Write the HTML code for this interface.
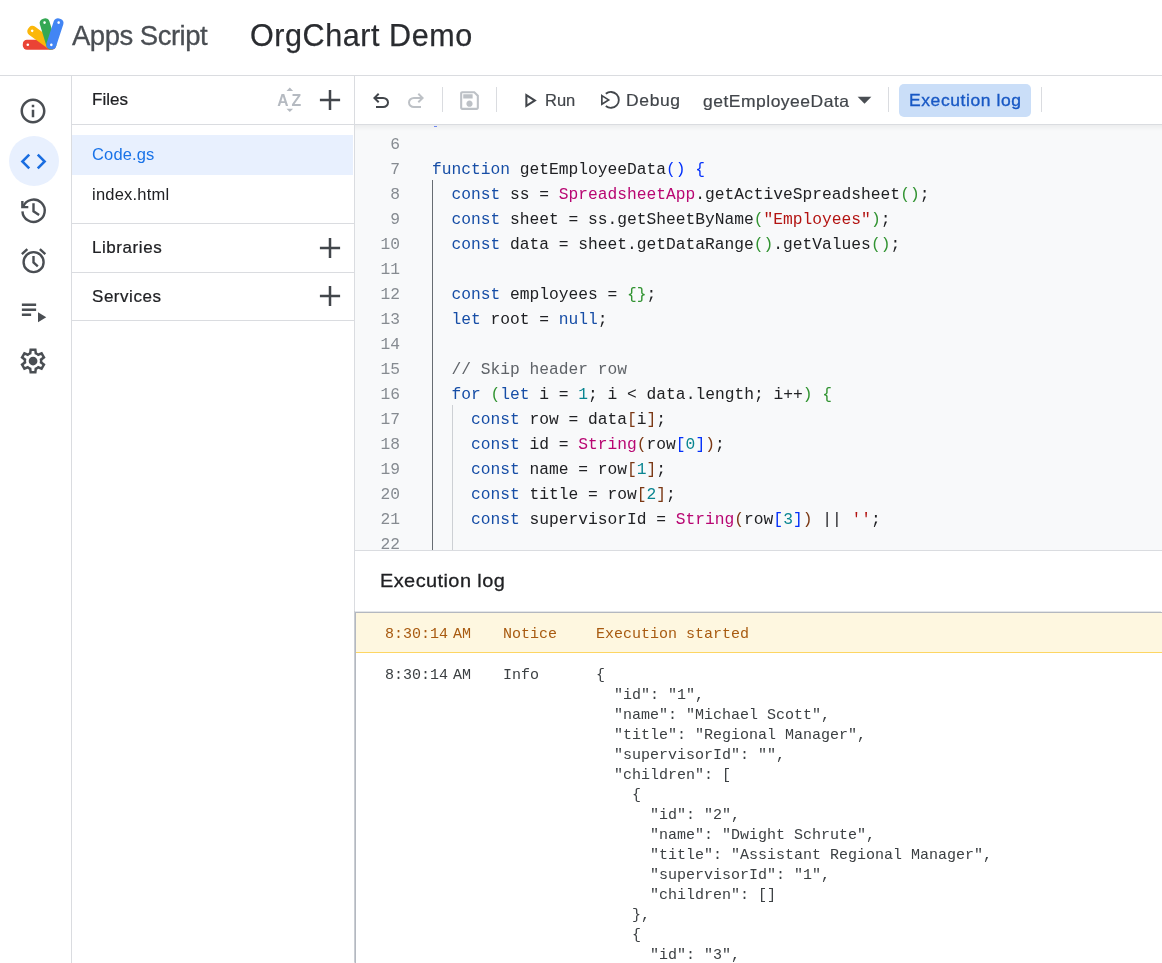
<!DOCTYPE html>
<html lang="en">
<head>
<meta charset="utf-8">
<title>OrgChart Demo - Apps Script</title>
<style>
*{box-sizing:border-box;margin:0;padding:0}
html,body{width:1162px;height:963px;overflow:hidden;background:#fff}
body{position:relative;font-family:"Liberation Sans",Arial,sans-serif;color:#202124}
.abs{position:absolute}
.fhead,.fitem,.tbt,.lt,#brand,#proj,#lgtitle,#ed{will-change:transform}
/* header */
#hdr{left:0;top:0;width:1162px;height:75px;background:#fff}
#hline{left:0;top:75px;width:1162px;height:1px;background:#dadce0}
#brand{-webkit-text-stroke:0.300px #4a4e53;left:72px;top:18px;font-size:27.5px;line-height:36px;color:#4a4e53;white-space:nowrap;letter-spacing:-0.5px}
#proj{-webkit-text-stroke:0.250px #2a2c30;left:249.500px;top:17px;font-size:30.500px;line-height:36px;color:#2a2c30;white-space:nowrap;letter-spacing:0.580px}
/* rail */
#rail{left:0;top:76px;width:71px;height:887px;background:#fff}
#railline{left:71px;top:76px;width:1px;height:887px;background:#dadce0}
.ricon{position:absolute;left:18px;width:30px;height:30px}
#selcirc{left:9px;top:136px;width:50px;height:50px;border-radius:50%;background:#e8f0fe}
/* files */
#files{left:72px;top:76px;width:282px;height:887px;background:#fff}
#filesline{left:354px;top:76px;width:1px;height:887px;background:#dadce0}
.fhead{-webkit-text-stroke:0.220px #202124;position:absolute;left:92px;font-size:17px;line-height:24px;color:#202124;white-space:nowrap}
.fitem{position:absolute;left:92px;font-size:16.5px;line-height:24px;color:#202124;white-space:nowrap}
.hl{position:absolute;left:72px;width:282px;height:1px;background:#dadce0}
.plus{position:absolute;left:319px;width:21px;height:21px}
/* toolbar */
#tb{left:355px;top:76px;width:807px;height:48px;background:#fff}
#tbline{left:355px;top:124px;width:807px;height:1px;background:#dadce0}
.tbt{-webkit-text-stroke:0.200px #41454a;position:absolute;font-size:16.500px;line-height:24px;color:#41454a;transform-origin:0 50%;white-space:nowrap}
.vsep{position:absolute;width:1px;height:25px;top:87px;background:#dadce0}
/* editor */
#ed{left:355px;top:125px;width:807px;height:425px;background:#f8f9fa;overflow:hidden}
#edline{left:355px;top:550px;width:807px;height:1px;background:#dadce0}
.ln,.cl{position:absolute;font-family:"Liberation Mono","DejaVu Sans Mono",monospace;font-size:16.25px;line-height:25px;height:25px;white-space:pre}
.ln{left:0;width:45px;text-align:right;color:#868b91}
.cl{left:77px;color:#202124}
.k{color:#174ea6}.c{color:#b31412}.t{color:#b80672}.n{color:#098591}.cm{color:#5f6368}
.b1{color:#0431fa}.b2{color:#319331}.b3{color:#7b3814}
.guide{position:absolute;width:1px;background:#9aa0a6}
/* log */
#lg{left:355px;top:551px;width:807px;height:412px;background:#fff}
#lgtitle{-webkit-text-stroke:0.280px #202124;letter-spacing:0.400px;left:380px;top:567px;font-size:19px;line-height:28px;color:#202124;white-space:nowrap;transform:scaleX(1.050);transform-origin:0 50%}
#lgbox{left:355px;top:612px;width:812px;height:360px;border:1px solid #b4b8c0;background:#fff}
#lgtop{left:355px;top:611px;width:806px;height:1px;background:#e4e6e9}
#lgleft{left:354px;top:611px;width:1px;height:351px;background:#c9cdd3}
#notice{left:356px;top:613px;width:806px;height:40px;background:#fef7e0;border-bottom:1px solid #fdd663}
.lt{position:absolute;font-family:"Liberation Mono","DejaVu Sans Mono",monospace;font-size:15px;line-height:20px;height:20px;white-space:pre;color:#3c4043}
.nt{color:#a85a10}
</style>
</head>
<body>
<div id="hdr" class="abs"></div>
<div id="hline" class="abs"></div>
<div id="brand" class="abs">Apps Script</div>
<div id="proj" class="abs">OrgChart Demo</div>

<div id="rail" class="abs"></div>
<div id="railline" class="abs"></div>
<div id="selcirc" class="abs"></div>
<svg class="abs" id="logo" style="left:20px;top:14px" width="48" height="40" viewBox="0 0 48 40">
<g transform="translate(31.300 30.800)">
<g transform="rotate(180)"><rect x="-4.500" y="-5" width="33" height="10" rx="4.200" fill="#ea4335"/><circle cx="23.500" cy="0" r="1.300" fill="#fff"/></g>
<g transform="rotate(-143.800)"><rect x="-4.500" y="-5" width="32.700" height="10" rx="4.200" fill="#fbb70a"/><circle cx="23.700" cy="0" r="1.300" fill="#fff"/></g>
<g transform="rotate(-106.800)"><rect x="-4.500" y="-5" width="31.800" height="10" rx="4.200" fill="#34a853"/><circle cx="23.200" cy="0" r="1.300" fill="#fff"/></g>
<g transform="rotate(-71.800)"><rect x="-4.500" y="-5" width="32" height="10" rx="4.200" fill="#4285f4"/><circle cx="23.400" cy="0" r="1.300" fill="#fff"/><circle cx="0" cy="0" r="1.300" fill="#fff"/></g>
</g>
</svg>
<svg class="ricon" id="ic-info" style="top:96px" viewBox="0 0 24 24"><path fill="#4a4e53" d="M11 7h2v2h-2zm0 4h2v6h-2zm1-9C6.48 2 2 6.48 2 12s4.48 10 10 10 10-4.48 10-10S17.52 2 12 2zm0 18c-4.41 0-8-3.59-8-8s3.59-8 8-8 8 3.59 8 8-3.59 8-8 8z"/></svg>
<svg class="ricon" id="ic-code" style="top:145.500px;left:18.300px;width:31px;height:31px" viewBox="0 0 24 24"><path fill="#1a6de0" d="M9.4 16.6L4.8 12l4.6-4.6L8 6l-6 6 6 6 1.4-1.4zm5.2 0l4.6-4.6-4.6-4.6L16 6l6 6-6 6-1.4-1.4z"/></svg>
<svg class="abs" id="ic-hist" style="left:16px;top:193px" width="36" height="36" viewBox="0 0 36 36"><g fill="none" stroke="#4a4e53" stroke-width="2.400"><path d="M7.230 13.570A11.150 11.150 0 1 1 6.440 18.330"/><path d="M6.350 8V14.150H12.300"/><path d="M17.500 10.300V18.300L23.100 21.900"/></g></svg>
<svg class="abs" id="ic-alarm" style="left:16px;top:243px" width="36" height="36" viewBox="0 0 36 36"><g fill="none" stroke="#4a4e53" stroke-width="2.400"><circle cx="17.600" cy="19.150" r="10"/><path d="M5.870 11.100L11.330 6.090M29.330 11.100L23.870 6.090"/><path d="M17.500 13.100V19.500L21.800 23.300"/></g></svg>
<svg class="ricon" id="ic-exec" style="top:296px" viewBox="0 0 24 24"><path fill="#4a4e53" d="M3.100 16v-2h7.400v2zm0-4v-2h11.400v2zm0-4V6h11.400v2zM16 20.900v-8l6.600 4z"/></svg>
<svg class="ricon" id="ic-gear" style="top:346px;left:17.600px" viewBox="0 0 24 24"><path fill="#4a4e53" d="m9.250 22-.4-3.200q-.325-.125-.612-.3t-.563-.375L4.700 19.375l-2.750-4.750 2.575-1.950Q4.500 12.500 4.500 12.338v-.675q0-.163.025-.338L1.950 9.375l2.750-4.750 2.975 1.250q.275-.2.575-.375t.6-.3l.4-3.200h5.500l.4 3.200q.325.125.613.300t.562.375l2.975-1.250 2.750 4.750-2.575 1.950q.025.175.025.338v.675q0 .163-.05.338l2.575 1.950-2.750 4.750-2.950-1.250q-.275.200-.575.375t-.600.300l-.4 3.200zM11 20h1.975l.350-2.650q.775-.2 1.438-.587t1.212-.938l2.475 1.025.975-1.700-2.150-1.625q.125-.350.175-.737T17.500 12t-.05-.787-.175-.738l2.150-1.625-.975-1.700-2.475 1.050q-.550-.575-1.212-.962t-1.438-.588L13 4h-1.975l-.350 2.650q-.775.200-1.437.588t-1.213.937L5.550 7.150l-.975 1.700 2.150 1.600q-.125.375-.175.750t-.050.800q0 .4.050.775t.175.750l-2.150 1.625.975 1.700 2.475-1.050q.550.575 1.213.963t1.437.587zm1.050-4.500q1.450 0 2.475-1.025T15.550 12t-1.025-2.475T12.050 8.500q-1.475 0-2.488 1.025T8.550 12t1.012 2.475T12.050 15.500"/></svg>


<div id="files" class="abs"></div>
<div id="filesline" class="abs"></div>
<div class="fhead" id="t-files" style="top:88px">Files</div>
<svg class="abs" id="ic-az" style="left:275px;top:85px;will-change:transform" width="30" height="30" viewBox="0 0 30 30">
<text x="2.300" y="21" font-family="Liberation Sans, Arial, sans-serif" font-size="17" font-weight="bold" fill="#b5bac1" textLength="11.300" lengthAdjust="spacingAndGlyphs">A</text>
<text x="16.600" y="21" font-family="Liberation Sans, Arial, sans-serif" font-size="17" font-weight="bold" fill="#b5bac1" textLength="9.700" lengthAdjust="spacingAndGlyphs">Z</text>
<path fill="#b5bac1" d="M11.500 5.900l3.300-3.300 3.300 3.300zM11.500 23.800l3.300 3.300 3.300-3.300z"/>
</svg>
<svg class="abs" style="left:317.900px;top:87.90px" width="24" height="24" viewBox="0 0 24 24"><path fill="#42464b" d="M1.900 10.750h20.200v2.500H1.900zM10.750 1.900h2.500v20.200h-2.500z"/></svg>
<div class="hl" style="top:124px"></div>
<div class="abs" id="selrow" style="left:72px;top:135px;width:281px;height:40px;background:#e8f0fe"></div>
<div class="fitem" id="t-code" style="top:142px;color:#1a73e8;letter-spacing:0.150px">Code.gs</div>
<div class="fitem" id="t-index" style="top:182px;letter-spacing:0.220px">index.html</div>
<div class="hl" style="top:223px"></div>
<div class="fhead" id="t-lib" style="top:236px;letter-spacing:0.560px">Libraries</div>
<svg class="abs" style="left:317.900px;top:236.00px" width="24" height="24" viewBox="0 0 24 24"><path fill="#42464b" d="M1.900 10.750h20.200v2.500H1.900zM10.750 1.900h2.500v20.200h-2.500z"/></svg>
<div class="hl" style="top:272px"></div>
<div class="fhead" id="t-svc" style="top:285px;letter-spacing:0.540px">Services</div>
<svg class="abs" style="left:317.900px;top:284.00px" width="24" height="24" viewBox="0 0 24 24"><path fill="#42464b" d="M1.900 10.750h20.200v2.500H1.900zM10.750 1.900h2.500v20.200h-2.500z"/></svg>
<div class="hl" style="top:320px"></div>


<div id="tb" class="abs"></div>
<div id="tbline" class="abs"></div>
<svg class="abs" id="ic-undo" style="left:369px;top:88.700px" width="24" height="24" viewBox="0 0 24 24"><path fill="#42464b" d="M7 19v-2h7.1q1.575 0 2.738-1T18 13.500 16.838 11 14.100 10H7.800l2.600 2.600L9 14 4 9l5-5 1.400 1.400L7.800 8h6.300q2.425 0 4.163 1.575T20 13.500t-1.737 3.925T14.100 19Z"/></svg>
<svg class="abs" id="ic-redo" style="left:404px;top:88.700px" width="24" height="24" viewBox="0 0 24 24"><path fill="#bdc1c6" transform="translate(24 0) scale(-1 1)" d="M7 19v-2h7.1q1.575 0 2.738-1T18 13.500 16.838 11 14.100 10H7.800l2.600 2.600L9 14 4 9l5-5 1.400 1.400L7.800 8h6.300q2.425 0 4.163 1.575T20 13.500t-1.737 3.925T14.100 19Z"/></svg>
<div class="vsep" style="left:442px"></div>
<svg class="abs" id="ic-save" style="left:457px;top:88px" width="25" height="25" viewBox="0 0 24 24"><path fill="#bdc1c6" d="M17 3H5c-1.11 0-2 .9-2 2v14c0 1.100.89 2 2 2h14c1.100 0 2-.9 2-2V7l-4-4zm2 16H5V5h11.170L19 7.830V19zm-7-7c-1.660 0-3 1.340-3 3s1.340 3 3 3 3-1.340 3-3-1.340-3-3-3zM6 6h9v4H6z"/></svg>
<div class="vsep" style="left:496px"></div>
<svg class="abs" id="ic-run" style="left:517px;top:88px" width="25" height="25" viewBox="0 0 24 24"><path fill="#42464b" d="M10 8.640L15.270 12 10 15.360V8.640M8 5v14l11-7L8 5z"/></svg>
<div class="tbt" id="t-run" style="left:545px;top:88px">Run</div>
<svg class="abs" id="ic-debug" style="left:598px;top:88px" width="25" height="25" viewBox="0 0 24 24">
<path fill="none" stroke="#42464b" stroke-width="1.750" d="M7.500 5.580A7.600 7.600 0 1 1 7.500 17.220"/>
<path fill="none" stroke="#42464b" stroke-width="1.600" stroke-linejoin="miter" d="M3.700 7.300L10.200 11.400 3.700 15.500Z"/>
</svg>
<div class="tbt" id="t-debug" style="left:626px;top:88px;letter-spacing:0.600px;transform:scaleX(1.060)">Debug</div>
<div class="tbt" id="t-fn" style="left:703px;top:89px;letter-spacing:0.470px;transform:scaleX(1.060)">getEmployeeData</div>
<svg class="abs" id="ic-dd" style="left:848.450px;top:83.250px" width="33" height="33" viewBox="0 0 24 24"><path fill="#4a4e53" d="M7 10l5 5 5-5z"/></svg>
<div class="vsep" style="left:888px"></div>
<div class="abs" id="exbtn" style="left:899px;top:84px;width:132px;height:33px;border-radius:5px;background:#cadef8"></div>
<div class="tbt" id="t-exl" style="left:908.500px;top:88px;color:#1858c4;letter-spacing:0.550px;-webkit-text-stroke:0.320px #1858c4;transform:scaleX(1.060)">Execution log</div>
<div class="vsep" style="left:1041px"></div>


<div id="ed" class="abs">
<div class="ln" style="top:7px">6</div>
<div class="ln" style="top:32px">7</div><div class="cl" style="top:32px"><span class="k">function</span> getEmployeeData<span class="b1">()</span> <span class="b1">{</span></div>
<div class="ln" style="top:57px">8</div><div class="cl" style="top:57px">  <span class="k">const</span> ss = <span class="t">SpreadsheetApp</span>.getActiveSpreadsheet<span class="b2">()</span>;</div>
<div class="ln" style="top:82px">9</div><div class="cl" style="top:82px">  <span class="k">const</span> sheet = ss.getSheetByName<span class="b2">(</span><span class="c">"Employees"</span><span class="b2">)</span>;</div>
<div class="ln" style="top:107px">10</div><div class="cl" style="top:107px">  <span class="k">const</span> data = sheet.getDataRange<span class="b2">()</span>.getValues<span class="b2">()</span>;</div>
<div class="ln" style="top:132px">11</div>
<div class="ln" style="top:157px">12</div><div class="cl" style="top:157px">  <span class="k">const</span> employees = <span class="b2">{}</span>;</div>
<div class="ln" style="top:182px">13</div><div class="cl" style="top:182px">  <span class="k">let</span> root = <span class="k">null</span>;</div>
<div class="ln" style="top:207px">14</div>
<div class="ln" style="top:232px">15</div><div class="cl" style="top:232px">  <span class="cm">// Skip header row</span></div>
<div class="ln" style="top:257px">16</div><div class="cl" style="top:257px">  <span class="k">for</span> <span class="b2">(</span><span class="k">let</span> i = <span class="n">1</span>; i &lt; data.length; i++<span class="b2">)</span> <span class="b2">{</span></div>
<div class="ln" style="top:282px">17</div><div class="cl" style="top:282px">    <span class="k">const</span> row = data<span class="b3">[</span>i<span class="b3">]</span>;</div>
<div class="ln" style="top:307px">18</div><div class="cl" style="top:307px">    <span class="k">const</span> id = <span class="t">String</span><span class="b3">(</span>row<span class="b1">[</span><span class="n">0</span><span class="b1">]</span><span class="b3">)</span>;</div>
<div class="ln" style="top:332px">19</div><div class="cl" style="top:332px">    <span class="k">const</span> name = row<span class="b3">[</span><span class="n">1</span><span class="b3">]</span>;</div>
<div class="ln" style="top:357px">20</div><div class="cl" style="top:357px">    <span class="k">const</span> title = row<span class="b3">[</span><span class="n">2</span><span class="b3">]</span>;</div>
<div class="ln" style="top:382px">21</div><div class="cl" style="top:382px">    <span class="k">const</span> supervisorId = <span class="t">String</span><span class="b3">(</span>row<span class="b1">[</span><span class="n">3</span><span class="b1">]</span><span class="b3">)</span> || <span class="c">''</span>;</div>
<div class="ln" style="top:407px">22</div>
<div class="guide" style="left:77px;top:55px;height:375px;background:#676c72"></div>
<div class="guide" style="left:97px;top:280px;height:150px;background:#cdd0d4"></div>
</div>
<div id="edline" class="abs"></div>
<div class="abs" id="edshadow" style="left:355px;top:125px;width:807px;height:6px;background:linear-gradient(#ecedee,#f8f9fa)"></div>
<div class="abs" style="left:434px;top:126px;width:3px;height:1px;background:#6f86ee"></div>

<div id="lg" class="abs"></div>
<div id="lgtitle" class="abs">Execution log</div>
<div id="lgbox" class="abs"></div>
<div id="lgtop" class="abs"></div>
<div id="lgleft" class="abs"></div>
<div id="notice" class="abs"></div>
<div class="lt nt" style="left:385px;top:625px">8:30:14<span style="display:inline-block;width:5px"> </span>AM</div>
<div class="lt nt" style="left:503px;top:625px">Notice</div>
<div class="lt nt" style="left:596px;top:625px">Execution started</div>
<div class="lt" style="left:385px;top:666px">8:30:14<span style="display:inline-block;width:5px"> </span>AM</div>
<div class="lt" style="left:503px;top:666px">Info</div>
<div class="lt" style="left:596px;top:666px">{</div>
<div class="lt" style="left:596px;top:686px">  "id": "1",</div>
<div class="lt" style="left:596px;top:706px">  "name": "Michael Scott",</div>
<div class="lt" style="left:596px;top:726px">  "title": "Regional Manager",</div>
<div class="lt" style="left:596px;top:746px">  "supervisorId": "",</div>
<div class="lt" style="left:596px;top:766px">  "children": [</div>
<div class="lt" style="left:596px;top:786px">    {</div>
<div class="lt" style="left:596px;top:806px">      "id": "2",</div>
<div class="lt" style="left:596px;top:826px">      "name": "Dwight Schrute",</div>
<div class="lt" style="left:596px;top:846px">      "title": "Assistant Regional Manager",</div>
<div class="lt" style="left:596px;top:866px">      "supervisorId": "1",</div>
<div class="lt" style="left:596px;top:886px">      "children": []</div>
<div class="lt" style="left:596px;top:906px">    },</div>
<div class="lt" style="left:596px;top:926px">    {</div>
<div class="lt" style="left:596px;top:946px">      "id": "3",</div>

</body>
</html>
